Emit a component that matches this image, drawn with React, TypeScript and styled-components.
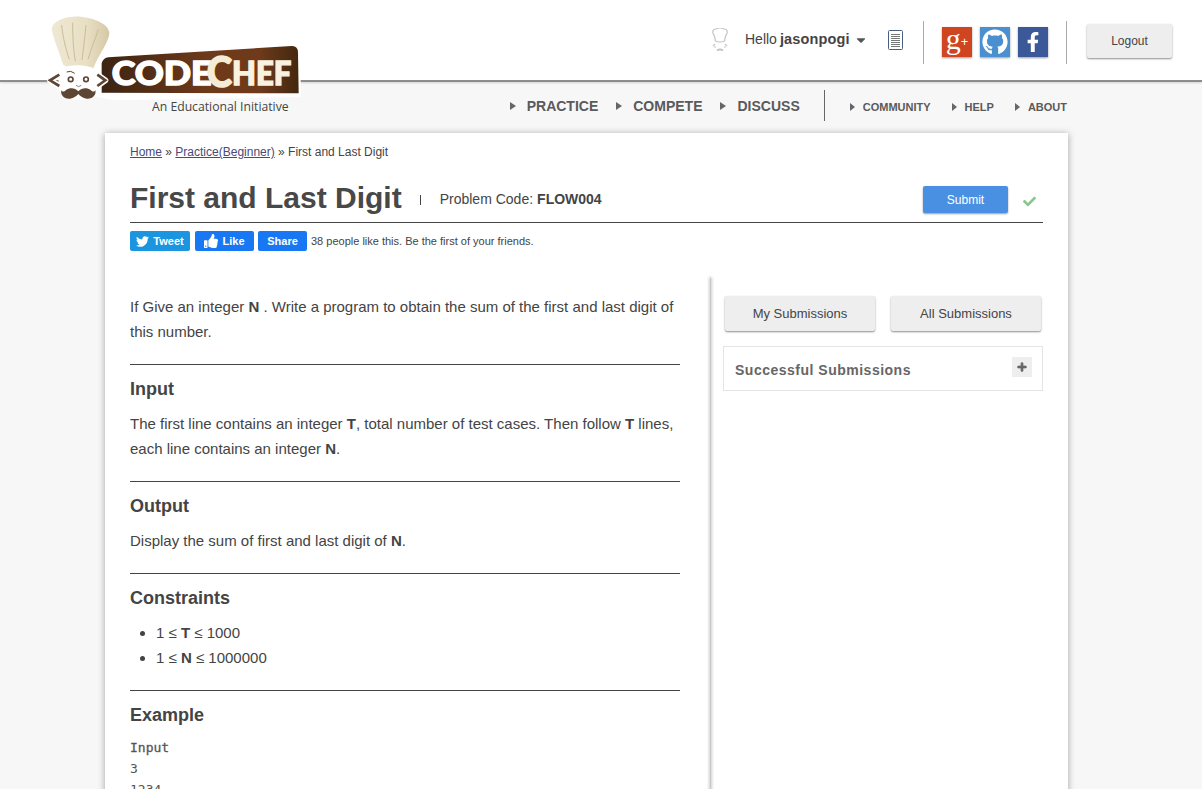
import styled, { createGlobalStyle } from 'styled-components';
import { FaCheck, FaCaretDown, FaFacebookF, FaGithub, FaPlus, FaThumbsUp, FaTwitter } from 'react-icons/fa';

const GlobalStyle = createGlobalStyle`
  html, body {
    margin: 0;
    height: 100%;
    overflow: hidden;
    background: #f7f7f7;
    font-family: "Liberation Sans", Arial, sans-serif;
    color: #444;
  }
  * { box-sizing: border-box; }
`;

const Page = styled.div`
  position: relative;
  width: 1202px;
  height: 789px;
  overflow: hidden;
`;

const TopBar = styled.header`
  height: 82px;
  background: #fff;
  border-bottom: 2px solid #8d8d8d;
  box-shadow: 0 1px 2px rgba(0, 0, 0, 0.15);
  display: flex;
  align-items: flex-start;
  justify-content: flex-end;
  padding: 21px 30px 0 0;
`;

const LogoSvg = styled.svg`
  position: absolute;
  left: 30px;
  top: 0;
  z-index: 2;
`;

const Avatar = styled.svg`
  margin: 7px 17px 0 0;
`;

const Hello = styled.div`
  margin-top: 10px;
  font-size: 14px;
  line-height: 17px;
  color: #444;
  width: 143px;
  display: flex;
  align-items: center;
  b { margin-left: 3px; font-size: 14.5px; letter-spacing: 0.15px; }
  svg { margin-left: 4px; color: #555; }
`;

const DocIcon = styled.svg`
  margin: 9px 20px 0 0;
`;

const Divider = styled.div`
  width: 1px;
  height: 43px;
  background: #aaa;
`;

const Socials = styled.div`
  display: flex;
  gap: 8px;
  margin: 6px 18px 0 18px;
`;

const Social = styled.a<{ $bg: string }>`
  width: 30px;
  height: 30px;
  background: ${(p) => p.$bg};
  color: #fff;
  display: flex;
  align-items: center;
  justify-content: center;
  box-shadow: 0 1px 2px rgba(0, 0, 0, 0.4);
`;

const GPlus = styled.span`
  font-family: "Liberation Serif", serif;
  font-weight: 400;
  font-size: 30px;
  line-height: 24px;
  margin-top: -7px;
  sup { font-family: "Liberation Sans", sans-serif; font-size: 13px; line-height: 0; vertical-align: 3px; }
`;

const LogoutBtn = styled.button`
  margin: 3px 0 0 20px;
  width: 85px;
  height: 34px;
  border: 0;
  border-radius: 2px;
  background: #eee;
  box-shadow: 0 1px 2px rgba(0, 0, 0, 0.45);
  font: 12px "Liberation Sans", sans-serif;
  color: #444;
`;

const SubNav = styled.nav`
  height: 51px;
  display: flex;
  align-items: flex-start;
  justify-content: flex-end;
  padding: 8px 135px 0 0;
`;

const NavItem = styled.a<{ $small?: boolean }>`
  display: flex;
  align-items: center;
  margin-left: ${(p) => (p.$small ? '21px' : '18px')};
  height: 32px;
  font-weight: 700;
  font-size: ${(p) => (p.$small ? '11px' : '14px')};
  color: #5a5a5a;
  padding-top: ${(p) => (p.$small ? '1px' : '0')};
  &::before {
    content: '';
    border-left: ${(p) => (p.$small ? '5px' : '6px')} solid #666;
    border-top: 4px solid transparent;
    border-bottom: 4px solid transparent;
    margin-right: ${(p) => (p.$small ? '8px' : '11px')};
  }
`;

const NavDivider = styled.div`
  width: 1px;
  height: 31px;
  margin-left: 24px;
  margin-right: 4px;
  background: #666;
`;

const Card = styled.main`
  width: 963px;
  height: 700px;
  margin-left: 105px;
  background: #fff;
  box-shadow: 0 1px 7px rgba(0, 0, 0, 0.35);
  padding: 0 25px;
`;

const Crumbs = styled.div`
  padding-top: 12px;
  font-size: 12px;
  line-height: 14px;
  color: #444;
  a { color: #4a4a7a; text-decoration: underline; }
`;

const TitleRow = styled.div`
  height: 64px;
  padding-top: 20px;
  display: flex;
  align-items: flex-start;
  border-bottom: 1px solid #444;
`;

const Title = styled.h1`
  margin: 0;
  font-size: 30px;
  line-height: 38px;
  font-weight: 700;
  color: #484848;
`;

const Code = styled.div`
  margin: 12px 0 0 18px;
  font-size: 14px;
  line-height: 17px;
  color: #444;
  display: flex;
  &::before {
    content: '';
    width: 1px;
    height: 10px;
    margin: 4px 19px 0 0;
    background: #444;
  }
  b { margin-left: 4px; }
`;

const SubmitWrap = styled.div`
  margin-left: auto;
  margin-top: 7px;
  display: flex;
  gap: 15px;
  color: #8cc68c;
  svg { margin-top: 9px; margin-right: 7px; }
`;

const SubmitBtn = styled.button`
  width: 85px;
  height: 27px;
  border: 0;
  border-radius: 2px;
  background: #4a90e2;
  box-shadow: 0 1px 2px rgba(0, 0, 0, 0.4);
  color: #fff;
  font: 12px "Liberation Sans", sans-serif;
`;

const ShareRow = styled.div`
  margin-top: 8px;
  height: 47px;
  display: flex;
  align-items: flex-start;
`;

const ShareBtn = styled.a<{ $bg: string; $w: number; $gap: number }>`
  width: ${(p) => p.$w}px;
  height: 20px;
  margin-right: ${(p) => p.$gap}px;
  background: ${(p) => p.$bg};
  border-radius: 2px;
  color: #fff;
  font-size: 11px;
  font-weight: 700;
  display: flex;
  align-items: center;
  justify-content: center;
  gap: 4px;
`;

const ShareText = styled.span`
  font-size: 11px;
  line-height: 20px;
  color: #444;
`;

const Columns = styled.div`
  display: flex;
  align-items: stretch;
  height: 600px;
`;

const Statement = styled.section`
  position: relative;
  width: 581px;
  padding: 16px 31px 0 0;
  font-size: 15px;
  line-height: 25px;
  color: #444;
  p { margin: 0; }
  &::after {
    content: '';
    position: absolute;
    right: 0;
    top: 0;
    bottom: 0;
    width: 1px;
    background: #c8c8c8;
    box-shadow: 0 0 3px 1px rgba(0, 0, 0, 0.2);
  }
`;

const Rule = styled.hr`
  border: 0;
  border-top: 1px solid #444;
  margin: 20px 0 12px;
`;

const Heading = styled.h3`
  margin: 0 0 9px;
  font-size: 18px;
  line-height: 25px;
  font-weight: 700;
  color: #444;
`;

const Bullets = styled.ul`
  margin: 0;
  padding: 0 0 0 26px;
`;

const Sample = styled.pre`
  margin: 0;
  font: 13px/21px "DejaVu Sans Mono", monospace;
  color: #555;
  b { font-weight: 400; -webkit-text-stroke: 0.3px #555; }
`;

const Side = styled.aside`
  width: 320px;
  margin-left: 12px;
  padding-top: 18px;
`;

const SideButtons = styled.div`
  display: flex;
  justify-content: space-between;
  padding: 0 2px;
`;

const SideBtn = styled.button`
  width: 150px;
  height: 35px;
  border: 0;
  border-radius: 2px;
  background: #eee;
  box-shadow: 0 1px 2px rgba(0, 0, 0, 0.45);
  font: 13px "Liberation Sans", sans-serif;
  color: #444;
`;

const Accordion = styled.div`
  margin-top: 15px;
  height: 45px;
  border: 1px solid #e4e4e4;
  display: flex;
  align-items: center;
  justify-content: space-between;
  padding: 0 10px 0 11px;
`;

const AccordionTitle = styled.span`
  padding-top: 2px;
  font-size: 14px;
  font-weight: 700;
  letter-spacing: 0.5px;
  color: #666;
`;

const PlusBox = styled.span`
  width: 20px;
  height: 20px;
  margin-top: -4px;
  background: #eee;
  color: #666;
  display: flex;
  align-items: center;
  justify-content: center;
  svg { stroke: currentColor; stroke-width: 40; }
`;

function Logo() {
  return (
    <LogoSvg width={290} height={125} viewBox="0 0 870 375">
      <defs>
        <linearGradient id="banner" x1="0" x2="1" y1="0" y2="0">
          <stop offset="0" stopColor="#3c2413" />
          <stop offset="0.55" stopColor="#6f3a1a" />
          <stop offset="0.8" stopColor="#6e3a1b" />
          <stop offset="1" stopColor="#43280f" />
        </linearGradient>
        <linearGradient id="hat" x1="0" x2="1" y1="0" y2="0">
          <stop offset="0" stopColor="#efe8d3" />
          <stop offset="0.6" stopColor="#e8dfc4" />
          <stop offset="1" stopColor="#d5c8a5" />
        </linearGradient>
      </defs>
      <path
        d="M215 172 L785 138 Q805 137 805 158 L808 286 L250 296 L200 285 Z"
        fill="#fff"
        stroke="#fff"
        strokeWidth="10"
      />
      <path d="M235 172 L785 138 Q804 137 804 158 L806 280 L215 278 L215 190 Q220 173 235 172 Z" fill="url(#banner)" />
      <path
        d="M100 195 C85 150 72 120 66 92 C62 68 95 52 130 50 C180 48 238 70 238 100 C238 125 205 165 190 205 C160 212 125 208 100 195 Z"
        fill="url(#hat)"
      />
      <path d="M95 75 C98 110 108 150 118 178 M128 68 C128 110 130 150 136 184 M168 75 C165 110 160 150 156 180 M205 88 C195 120 182 150 174 178" stroke="#cbbd98" strokeWidth="3" fill="none" />
      <path
        d="M95 205 C125 190 175 195 205 210 C214 235 208 262 205 270 C205 288 185 300 150 300 C115 300 92 290 88 268 C84 250 85 225 95 205 Z"
        fill="#fff"
      />
      <path d="M88 224 L60 241 L88 258 M202 224 L226 241 L202 258" stroke="#fff" strokeWidth="18" fill="none" strokeLinejoin="round" />
      <path d="M88 224 L60 241 L88 258 M202 224 L226 241 L202 258" stroke="#5e4634" strokeWidth="8" fill="none" />
      <circle cx="122" cy="238" r="7" fill="none" stroke="#5e4634" strokeWidth="5" />
      <circle cx="168" cy="238" r="7" fill="none" stroke="#5e4634" strokeWidth="5" />
      <path d="M110 216 Q122 210 134 220" stroke="#5e4634" strokeWidth="3" fill="none" />
      <path d="M138 256 Q145 264 154 256" stroke="#5e4634" strokeWidth="2" fill="none" />
      <path
        d="M145 274 C135 262 118 262 108 270 C102 276 96 276 94 270 C90 285 103 298 120 296 C132 295 140 287 145 282 C150 287 158 295 170 296 C187 298 200 285 196 270 C194 276 188 276 182 270 C172 262 155 262 145 274 Z"
        fill="#5e4634"
      />
      <text
        x="245"
        y="256"
        fontFamily="Lato, sans-serif"
        fontWeight="900"
        fontSize="94"
        fill="#fff"
        stroke="#fff"
        strokeWidth="4"
        textLength="300"
        lengthAdjust="spacingAndGlyphs"
      >
        CODE
      </text>
      <text
        x="530"
        y="262"
        fontFamily="Lato, sans-serif"
        fontWeight="900"
        fontSize="128"
        fill="#f5ecd7"
        stroke="#f5ecd7"
        strokeWidth="4"
        textLength="76"
        lengthAdjust="spacingAndGlyphs"
      >
        C
      </text>
      <text
        x="606"
        y="256"
        fontFamily="Lato, sans-serif"
        fontWeight="900"
        fontSize="94"
        fill="#f8f2e0"
        stroke="#f8f2e0"
        strokeWidth="4"
        textLength="178"
        lengthAdjust="spacingAndGlyphs"
      >
        HEF
      </text>
      <text
        x="366"
        y="333"
        fontFamily="'Open Sans', sans-serif"
        fontSize="36"
        fill="#444"
        textLength="410"
        lengthAdjust="spacingAndGlyphs"
      >
        An Educational Initiative
      </text>
    </LogoSvg>
  );
}

export default function App() {
  return (
    <Page>
      <GlobalStyle />
      <Logo />
      <TopBar>
        <Avatar width={16} height={24} viewBox="0 0 16 24" fill="none" stroke="#c4c4c4" strokeWidth="1.2">
          <path d="M2.5 8 C0 5 0 1 4 1 C6 0 10 0 12 1 C16 1 16 5 13.5 8 L12.5 13 Q8 15 3.5 13 Z" />
          <path d="M1 18 L3 16 M15 18 L13 16 M2 19 H4 M12 19 H14" />
          <path d="M5 22.5 Q8 20.5 11 22.5" strokeWidth="1.8" />
        </Avatar>
        <Hello>
          Hello <b>jasonpogi</b>
          <FaCaretDown size={14} />
        </Hello>
        <DocIcon width={15} height={20} viewBox="0 0 15 20" fill="none" stroke="#4a5f80">
          <rect x="0.5" y="0.5" width="14" height="19" rx="1" />
          <path d="M3 4.5H12M3 6.5H12M3 8.5H12M3 10.5H12M3 12.5H12M3 14.5H12M3 16.5H12" stroke="#777" />
        </DocIcon>
        <Divider />
        <Socials>
          <Social $bg="#cf4520">
            <GPlus>
              g<sup>+</sup>
            </GPlus>
          </Social>
          <Social $bg="#4a90d0">
            <FaGithub size={26} />
          </Social>
          <Social $bg="#3b5998">
            <FaFacebookF size={20} />
          </Social>
        </Socials>
        <Divider />
        <LogoutBtn>Logout</LogoutBtn>
      </TopBar>
      <SubNav>
        <NavItem>PRACTICE</NavItem>
        <NavItem>COMPETE</NavItem>
        <NavItem>DISCUSS</NavItem>
        <NavDivider />
        <NavItem $small>COMMUNITY</NavItem>
        <NavItem $small>HELP</NavItem>
        <NavItem $small>ABOUT</NavItem>
      </SubNav>
      <Card>
        <Crumbs>
          <a>Home</a> » <a>Practice(Beginner)</a> » First and Last Digit
        </Crumbs>
        <TitleRow>
          <Title>First and Last Digit</Title>
          <Code>
            Problem Code: <b>FLOW004</b>
          </Code>
          <SubmitWrap>
            <SubmitBtn>Submit</SubmitBtn>
            <FaCheck size={13} />
          </SubmitWrap>
        </TitleRow>
        <ShareRow>
          <ShareBtn $bg="#1b95e0" $w={60} $gap={5}>
            <FaTwitter size={13} /> Tweet
          </ShareBtn>
          <ShareBtn $bg="#1877f2" $w={59} $gap={4}>
            <FaThumbsUp size={14} /> Like
          </ShareBtn>
          <ShareBtn $bg="#1877f2" $w={49} $gap={4}>
            Share
          </ShareBtn>
          <ShareText>38 people like this. Be the first of your friends.</ShareText>
        </ShareRow>
        <Columns>
          <Statement>
            <p>
              If Give an integer <b>N</b> . Write a program to obtain the sum of the first and last digit of this number.
            </p>
            <Rule />
            <Heading>Input</Heading>
            <p>
              The first line contains an integer <b>T</b>, total number of test cases. Then follow <b>T</b> lines, each line
              contains an integer <b>N</b>.
            </p>
            <Rule />
            <Heading>Output</Heading>
            <p>
              Display the sum of first and last digit of <b>N</b>.
            </p>
            <Rule />
            <Heading>Constraints</Heading>
            <Bullets>
              <li>
                1 ≤ <b>T</b> ≤ 1000
              </li>
              <li>
                1 ≤ <b>N</b> ≤ 1000000
              </li>
            </Bullets>
            <Rule />
            <Heading>Example</Heading>
            <Sample>
              <b>Input</b>
              {'\n3\n1234\n'}
            </Sample>
          </Statement>
          <Side>
            <SideButtons>
              <SideBtn>My Submissions</SideBtn>
              <SideBtn>All Submissions</SideBtn>
            </SideButtons>
            <Accordion>
              <AccordionTitle>Successful Submissions</AccordionTitle>
              <PlusBox>
                <FaPlus size={10} />
              </PlusBox>
            </Accordion>
          </Side>
        </Columns>
      </Card>
    </Page>
  );
}
